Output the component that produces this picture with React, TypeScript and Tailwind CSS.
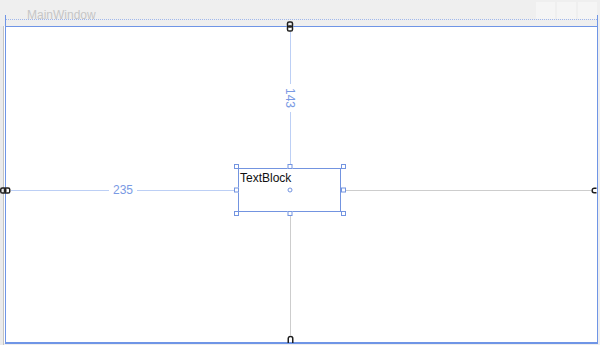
import React from "react";

const handleCls = "absolute w-[5px] h-[5px] bg-white border border-[#7394e0]";

export default function App() {
  return (
    <div
      className="w-[600px] h-[345px] bg-[#efefef] overflow-hidden flex flex-col relative"
      style={{ fontFamily: '"Liberation Sans", Arial, sans-serif' }}
    >
      {/* title bar */}
      <div className="h-[26px] flex justify-between items-start relative">
        <div className="pl-[27px] pt-[7px] text-[12px] leading-[16px] text-[#c6c6c6]">MainWindow</div>
        <div className="flex gap-[2px] pt-[2px] pr-[3px]">
          <div className="w-[19px] h-[17px] bg-[#f5f5f5]" />
          <div className="w-[19px] h-[17px] bg-[#f5f5f5]" />
          <div className="w-[19px] h-[17px] bg-[#f5f5f5]" />
        </div>
        {/* selection adorner top: dotted rail and vertical extensions */}
        <div className="absolute left-[5px] top-[15px] w-[593px] h-[11px] border-x border-[#6f95e6]">
          <div className="mt-[4px] border-t border-dotted border-[#9fb7ec]" />
        </div>
      </div>

      {/* body */}
      <div className="flex flex-1">
        <div className="w-[3px] bg-[#ebebeb]" />
        <div className="w-px bg-[#c4c4c4]" />
        <div className="w-px bg-white h-[317px]" />
        <div className="w-[593px] h-[318px] bg-white border border-b-2 border-[#6f95e6] grid grid-cols-[232px_103px_1fr] grid-rows-[141px_44px_1fr]">
          {/* row 1 */}
          <div />
          <div className="flex flex-col items-center">
            <svg className="-mt-[6px] shrink-0 ml-px" width="8" height="11" viewBox="0 0 8 11">
              <rect x="1.5" y="1" width="5" height="5" rx="1.6" fill="none" stroke="#1e1e1e" strokeWidth="1.5" />
              <rect x="1.5" y="5" width="5" height="5" rx="1.6" fill="none" stroke="#1e1e1e" strokeWidth="1.5" />
            </svg>
            <div className="w-px flex-1 bg-[#bccff5] ml-px" />
            <div className="w-[16px] h-[28px] flex items-center justify-center ml-px">
              <span className="inline-block rotate-90 whitespace-nowrap text-[12px] leading-[16px] text-[#7a9ae4]">143</span>
            </div>
            <div className="w-px h-[56px] bg-[#bccff5] ml-px" />
          </div>
          <div />

          {/* row 2 */}
          <div className="flex items-center">
            <svg className="-ml-[6px] shrink-0" width="11" height="7" viewBox="0 0 11 7">
              <rect x="0.75" y="1" width="5" height="5" rx="1.6" fill="none" stroke="#1e1e1e" strokeWidth="1.5" />
              <rect x="4.75" y="1" width="5" height="5" rx="1.6" fill="none" stroke="#1e1e1e" strokeWidth="1.5" />
            </svg>
            <div className="h-px flex-1 bg-[#bccff5]" />
            <div className="w-[28px] text-center text-[12px] leading-[16px] text-[#7a9ae4]">235</div>
            <div className="h-px w-[101px] bg-[#bccff5]" />
          </div>
          <div className="relative border border-[#7394e0]">
            <div className="pl-[1px] pt-[1px] text-[12px] leading-[16px] text-[#111]">TextBlock</div>
            <div className={`${handleCls} -left-[5px] -top-[5px]`} />
            <div className={`${handleCls} left-1/2 -translate-x-1/2 -top-[5px]`} />
            <div className={`${handleCls} -right-[6px] -top-[5px]`} />
            <div className={`${handleCls} -left-[5px] top-1/2 -translate-y-1/2`} />
            <div className={`${handleCls} -right-[6px] top-1/2 -translate-y-1/2`} />
            <div className={`${handleCls} -left-[5px] -bottom-[5px]`} />
            <div className={`${handleCls} left-1/2 -translate-x-1/2 -bottom-[5px]`} />
            <div className={`${handleCls} -right-[6px] -bottom-[5px]`} />
            <div className="absolute left-1/2 top-1/2 -translate-x-1/2 -translate-y-1/2 w-[5px] h-[5px] rounded-full bg-white border border-[#7394e0]" />
          </div>
          <div className="flex items-center">
            <div className="h-px flex-1 bg-[#cdcdcd] ml-[5px]" />
            <svg className="shrink-0" width="6" height="7" viewBox="0 0 6 7">
              <path d="M5.5 1.25 H3.2 A2 2 0 0 0 1.2 3.25 V3.75 A2 2 0 0 0 3.2 5.75 H5.5" fill="none" stroke="#1e1e1e" strokeWidth="1.5" />
            </svg>
          </div>

          {/* row 3 */}
          <div />
          <div className="flex flex-col items-center">
            <div className="w-px flex-1 bg-[#cdcdcd] mt-[4px] ml-px" />
            <svg className="shrink-0 -mb-[1px] ml-px" width="7" height="8" viewBox="0 0 7 8">
              <path d="M1.25 8 V3.5 A2 2 0 0 1 3.25 1.5 H3.75 A2 2 0 0 1 5.75 3.5 V8" fill="none" stroke="#1e1e1e" strokeWidth="1.5" />
            </svg>
          </div>
          <div />
        </div>
      </div>
    </div>
  );
}
